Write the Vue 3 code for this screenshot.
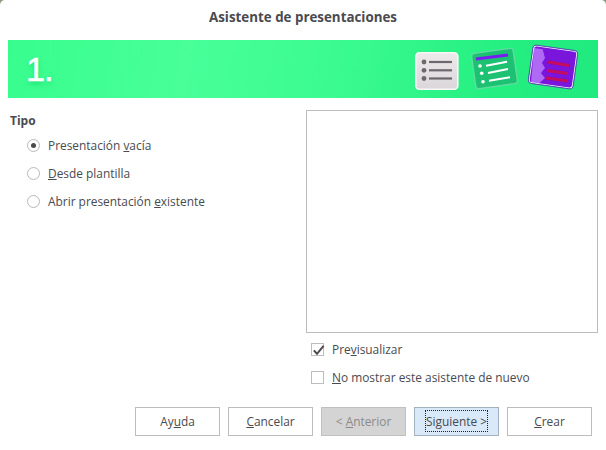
<script setup>
const options = [
  { before: 'Presentación ', key: 'v', after: 'acía', checked: true },
  { before: '', key: 'D', after: 'esde plantilla', checked: false },
  { before: 'Abrir presentación ', key: 'e', after: 'xistente', checked: false },
]
const buttons = [
  { before: 'Ay', key: 'u', after: 'da', kind: '' },
  { before: '', key: 'C', after: 'ancelar', kind: '' },
  { before: '< ', key: 'A', after: 'nterior', kind: 'disabled' },
  { before: 'Siguiente >', key: '', after: '', kind: 'primary' },
  { before: '', key: 'C', after: 'rear', kind: '' },
]
</script>

<template>
  <div class="dialog">
    <header class="title">Asistente de presentaciones</header>

    <section class="banner">
      <span class="step">1.</span>
      <svg class="art" width="180" height="58" viewBox="0 0 180 58" aria-hidden="true">
        <defs>
          <linearGradient id="g1" x1="0" y1="0" x2="0" y2="1">
            <stop offset="0" stop-color="#eeeaec" />
            <stop offset="1" stop-color="#dcd6da" />
          </linearGradient>
          <filter id="blur"><feGaussianBlur stdDeviation="0.35" /></filter>
        </defs>
        <g filter="url(#blur)">
          <!-- list card -->
          <rect x="7.8" y="12.8" width="42" height="36.5" rx="3.5" fill="url(#g1)" stroke="#f8f6f7" stroke-width="1.6" />
          <g fill="#6d686c">
            <circle cx="16" cy="22" r="2.4" /><circle cx="16" cy="30.3" r="2.4" /><circle cx="16" cy="38.5" r="2.4" />
            <rect x="21" y="20.9" width="23" height="2.2" /><rect x="21" y="29.2" width="23" height="2.2" /><rect x="21" y="37.4" width="23" height="2.2" />
          </g>
          <!-- green card -->
          <rect x="65.5" y="10.75" width="42" height="35.5" rx="3" transform="rotate(-8 86.5 28.5)" fill="#1cc272" stroke="#5fdc9e" stroke-width="1.4" />
          <line x1="68" y1="19" x2="100" y2="15" stroke="#7a1ff0" stroke-width="3" />
          <g fill="#fff">
            <circle cx="72" cy="26" r="1.8" /><circle cx="73.7" cy="33.3" r="1.8" /><circle cx="75" cy="41.7" r="1.8" />
          </g>
          <g stroke="#fff" stroke-width="1.9">
            <line x1="78" y1="25.7" x2="99" y2="21.7" />
            <line x1="80" y1="33" x2="100" y2="29" />
            <line x1="81" y1="40.7" x2="102" y2="37.3" />
          </g>
          <!-- purple card -->
          <rect x="123.2" y="8.5" width="43.6" height="37" rx="3" transform="rotate(8 145 27)" fill="#7a12dc" />
          <path d="M126 8 L134.7 9.2 L137 18 L134 23 L137 28 L133 33 L137 38 L131 43.5 L123 42.4 Z" fill="#ae6af5" />
          <rect x="123.2" y="8.5" width="43.6" height="37" rx="3" transform="rotate(8 145 27)" fill="none" stroke="#f3ecff" stroke-width="1.1" />
          <rect x="122.4" y="7.7" width="45.2" height="38.6" rx="3.6" transform="rotate(8 145 27)" fill="none" stroke="#5a10b8" stroke-width="0.7" />
          <g stroke="#c5105e" stroke-width="3">
            <line x1="140" y1="22" x2="161" y2="25.5" />
            <line x1="139" y1="30.5" x2="160" y2="33.5" />
            <line x1="138" y1="38" x2="160" y2="41" />
          </g>
        </g>
      </svg>
    </section>

    <main class="content">
      <div class="type">
        <h2 class="type-heading">Tipo</h2>
        <label v-for="o in options" :key="o.after" class="radio-row">
          <span class="radio" :class="{ on: o.checked }"></span>
          <span>{{ o.before }}<u>{{ o.key }}</u>{{ o.after }}</span>
        </label>
      </div>
      <div class="side">
        <div class="preview"></div>
        <label class="check-row first">
          <span class="check">
            <svg width="13" height="13" viewBox="0 0 13 13"><path d="M1.8 6.4 L5 9.8 L11.6 1.8" fill="none" stroke="#4a4a4f" stroke-width="2" /></svg>
          </span>
          <span>Pre<u>v</u>isualizar</span>
        </label>
        <label class="check-row">
          <span class="check"></span>
          <span><u>N</u>o mostrar este asistente de nuevo</span>
        </label>
      </div>
    </main>

    <footer class="actions">
      <button v-for="b in buttons" :key="b.before + b.after" class="btn" :class="b.kind" type="button">
        <span class="btn-label">{{ b.before }}<u v-if="b.key">{{ b.key }}</u>{{ b.after }}</span>
      </button>
    </footer>
  </div>
</template>

<style scoped>
.dialog {
  width: 606px;
  height: 450px;
  background: #fff;
  border-radius: 5px 5px 0 0;
  font-family: "Open Sans", sans-serif;
  font-size: 11.9px;
  color: #4a4a4f;
  overflow: hidden;
}
.title {
  height: 40px;
  line-height: 35px;
  text-align: center;
  font-size: 13.35px;
  font-weight: 700;
  color: #4a4a50;
}
.banner {
  height: 58px;
  margin: 0 8px;
  padding: 0 10px 0 18px;
  display: flex;
  align-items: center;
  justify-content: space-between;
  background: linear-gradient(100deg, #38fd8e 0%, #48ff98 30%, #3bfb90 55%, #24ee80 85%, #20ea7e 100%);
}
.step {
  font-family: "Liberation Sans", sans-serif;
  font-size: 34px;
  line-height: 1;
  color: #fff;
  -webkit-text-stroke: 0.6px #fff;
  letter-spacing: -1px;
  text-shadow: 0 3px 5px rgba(0, 200, 90, 0.55);
}
.content {
  display: grid;
  grid-template-columns: 306px 292px;
  padding-top: 12px;
}
.type-heading {
  margin: 2px 0 2px 10px;
  font-size: 12px;
  font-weight: 700;
  line-height: 17px;
  color: #4a4a50;
}
.radio-row {
  display: flex;
  align-items: center;
  gap: 8px;
  height: 28px;
  padding-left: 27px;
}
.radio {
  width: 11px;
  height: 11px;
  border: 1px solid #b9b9b9;
  border-radius: 50%;
  display: grid;
  place-items: center;
  flex: none;
}
.radio.on::after {
  content: "";
  width: 5px;
  height: 5px;
  border-radius: 50%;
  background: #4a4a4f;
}
.preview {
  height: 223px;
  box-sizing: border-box;
  border: 1px solid #bdbdbd;
  background: #fff;
}
.check-row {
  display: flex;
  align-items: center;
  gap: 8px;
  height: 28px;
  padding-left: 5px;
}
.check-row.first { margin-top: 2px; }
.check {
  width: 11px;
  height: 11px;
  border: 1px solid #bdbdbd;
  display: grid;
  place-items: center;
  flex: none;
}
.check svg { display: block; }
.actions {
  display: flex;
  justify-content: flex-end;
  gap: 8px;
  padding: 16px 14px 0 0;
}
.btn {
  width: 85px;
  height: 29px;
  padding: 0 0 2px;
  border: 1px solid #bdbdbd;
  background: #fff;
  font: inherit;
  color: inherit;
}
.btn.disabled {
  background: #d4d4d4;
  color: #8a8a8a;
  border-color: #c0c0c0;
}
.btn.primary {
  background: #d9e9f7;
  border-color: #a4b2bf;
}
.btn.primary .btn-label {
  outline: 1px dotted #222;
  padding: 2px 0;
}
</style>

<style>
html, body { background: #8c9c84; }
</style>
